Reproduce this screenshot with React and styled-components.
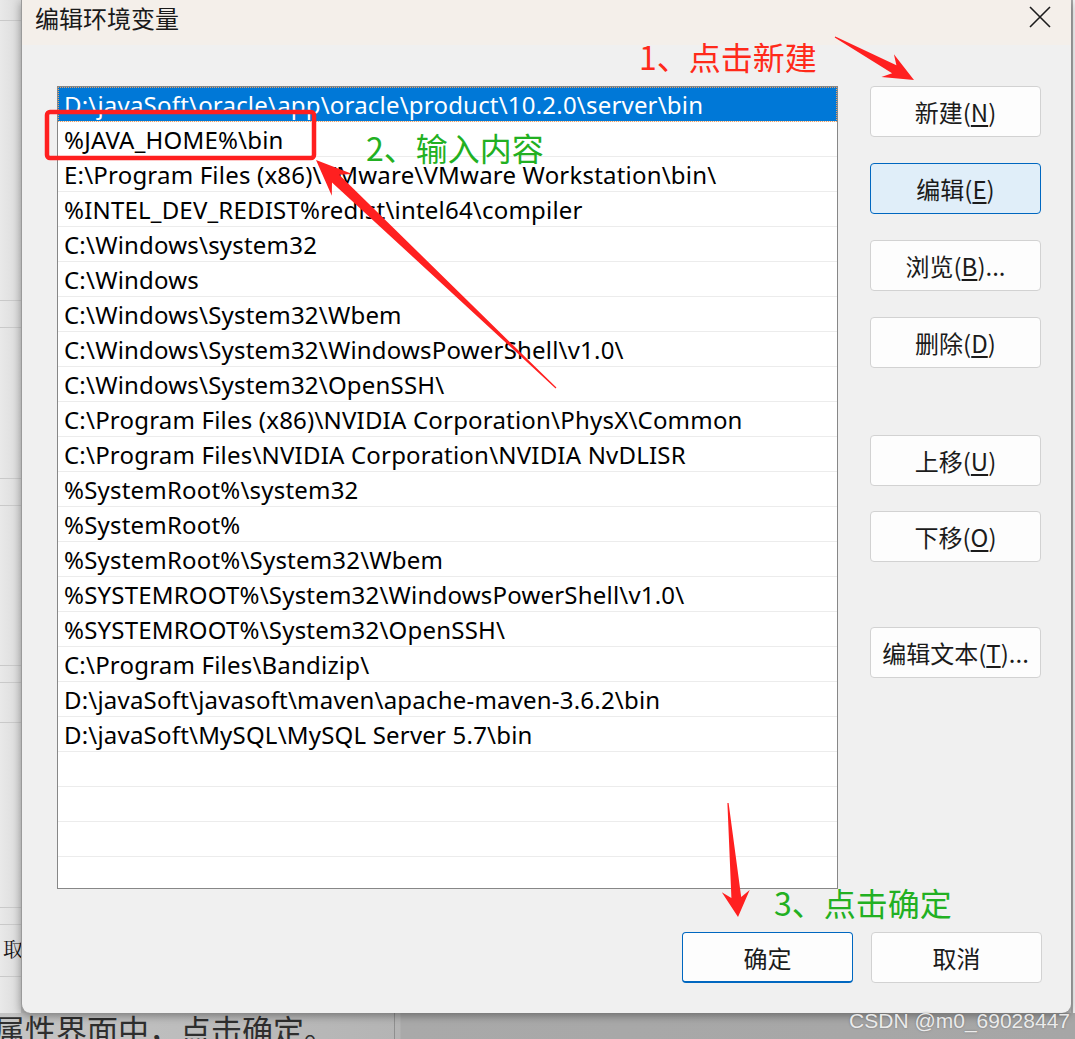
import styled, { createGlobalStyle } from 'styled-components';

const GlobalStyle = createGlobalStyle`
    html, body {
        margin: 0;
        padding: 0;
        overflow: hidden;
    }
    body {
        font-family: "Noto Sans", "Noto Sans CJK SC", sans-serif;
    }
`;

const CJK = `"Noto Sans CJK SC", "Noto Sans", sans-serif`;
const LATIN = `"Noto Sans", "Noto Sans CJK SC", sans-serif`;

const Page = styled.div`
    position: relative;
    width: 1075px;
    height: 1039px;
    display: grid;
    grid-template-columns: 21px 1050px 4px;
    grid-template-rows: 1013px 26px;
    background: #bdbdbd;
    overflow: hidden;
`;

const LeftStrip = styled.div`
    background:
        linear-gradient(#c9c9c9, #c9c9c9) 0 20px / 100% 1px no-repeat,
        linear-gradient(#c9c9c9, #c9c9c9) 0 300px / 100% 1px no-repeat,
        linear-gradient(#c9c9c9, #c9c9c9) 0 327px / 100% 1px no-repeat,
        linear-gradient(#c9c9c9, #c9c9c9) 0 478px / 100% 1px no-repeat,
        linear-gradient(#c9c9c9, #c9c9c9) 0 505px / 100% 1px no-repeat,
        linear-gradient(#c9c9c9, #c9c9c9) 0 665px / 100% 1px no-repeat,
        linear-gradient(#c9c9c9, #c9c9c9) 0 682px / 100% 1px no-repeat,
        linear-gradient(#c9c9c9, #c9c9c9) 0 722px / 100% 1px no-repeat,
        linear-gradient(#c9c9c9, #c9c9c9) 0 907px / 100% 1px no-repeat,
        linear-gradient(#c9c9c9, #c9c9c9) 0 924px / 100% 1px no-repeat,
        linear-gradient(#c9c9c9, #c9c9c9) 0 976px / 100% 1px no-repeat,
        linear-gradient(90deg, #e9e9e9, #dadada);
    display: flex;
    flex-direction: column;
    justify-content: flex-end;
    padding-bottom: 50px;
    box-sizing: border-box;
`;

const StripChar = styled.span`
    font-family: "Noto Serif CJK SC", ${CJK};
    font-size: 20px;
    color: #111;
    padding-left: 3px;
`;

const RightStrip = styled.div`
    background: #f2f2f2;
    border-left: 2px solid #a8a8a8;
`;

const BottomBand = styled.div`
    grid-column: 1 / -1;
    display: flex;
    background: linear-gradient(90deg, #c4c4c4 0, #b4b4b4 400px, #a9a9a9 401px, #a6a6a6 100%);
`;

const BandText = styled.span`
    width: 400px;
    height: 26px;
    font-family: ${CJK};
    font-size: 31px;
    line-height: 31px;
    color: #2e2e2e;
    margin-left: -6px;
    padding-top: 0;
    white-space: nowrap;
    overflow: hidden;
    border-right: 1px solid #8f8f8f;
`;

const Dialog = styled.div`
    display: flex;
    flex-direction: column;
    background: #f0f0f0;
    border-left: 1px solid #9a9a9a;
    border-radius: 0 0 9px 9px;
    box-shadow: 0 3px 8px rgba(0, 0, 0, 0.35);
    position: relative;
    z-index: 1;
`;

const TitleBar = styled.div`
    height: 45px;
    display: flex;
    align-items: center;
    justify-content: space-between;
    padding: 0 20px 0 13px;
    background: #f4efea;
`;

const Title = styled.span`
    font-family: ${CJK};
    font-size: 24px;
    color: #1a1a1a;
    margin-top: -10px;
`;

const Close = styled.svg`
    width: 22px;
    height: 22px;
    margin-top: -12px;
`;

const Body = styled.div`
    flex: 1;
    display: flex;
    flex-direction: column;
    padding: 41px 29px 30px 35px;
`;

const Main = styled.div`
    display: flex;
    gap: 32px;
`;

const ListBox = styled.div`
    width: 781px;
    height: 803px;
    box-sizing: border-box;
    border: 1px solid #878787;
    background: #fff;
    overflow: hidden;
`;

const Row = styled.div`
    height: 35px;
    box-sizing: border-box;
    display: flex;
    align-items: center;
    padding-left: 6px;
    border-bottom: 1px solid #ececec;
    font-family: ${LATIN};
    font-size: 24px;
    letter-spacing: 0.2px;
    white-space: nowrap;
    color: ${(p) => (p.$selected ? '#fff' : '#000')};
    background: ${(p) => (p.$selected ? '#0078d7' : 'transparent')};
    outline: ${(p) => (p.$selected ? '1px dotted #f0a060' : 'none')};
    outline-offset: -1px;
`;

const ButtonColumn = styled.div`
    display: flex;
    flex-direction: column;
    width: 171px;
`;

const Button = styled.div`
    width: 171px;
    height: 51px;
    box-sizing: border-box;
    display: flex;
    align-items: center;
    justify-content: center;
    margin-top: ${(p) => p.$gap || 0}px;
    border: 1px solid #d2d2d2;
    border-bottom-width: ${(p) => (p.$primary ? 2 : 1)}px;
    border-color: ${(p) => (p.$active || p.$primary ? '#0067c0' : '#d2d2d2')};
    border-radius: 4px;
    background: ${(p) => (p.$active ? '#e0eef9' : '#fdfdfd')};
    font-family: ${CJK};
    font-size: 24px;
    color: #1b1b1b;

    u {
        text-underline-offset: 3px;
    }
`;

const Footer = styled.div`
    display: flex;
    justify-content: flex-end;
    gap: 18px;
    margin-top: 43px;
`;

const Overlay = styled.div`
    position: absolute;
    inset: 0;
    z-index: 5;
    pointer-events: none;
`;

const Drawing = styled.svg`
    position: absolute;
    left: 0;
    top: 0;
`;

const Note = styled.span`
    position: absolute;
    left: ${(p) => p.$x}px;
    top: ${(p) => p.$y}px;
    font-family: ${CJK};
    font-size: 32px;
    line-height: 1;
    white-space: nowrap;
    color: ${(p) => (p.$tone === 'red' ? '#ff2a1a' : '#22b022')};
`;

const Watermark = styled.span`
    position: absolute;
    right: 5px;
    bottom: 6px;
    font-family: "Liberation Sans", Arial, sans-serif;
    font-size: 21px;
    color: rgba(255, 255, 255, 0.85);
    text-shadow: 0 0 2px rgba(80, 80, 80, 0.6);
`;

const entries = [
    'D:\\javaSoft\\oracle\\app\\oracle\\product\\10.2.0\\server\\bin',
    '%JAVA_HOME%\\bin',
    'E:\\Program Files (x86)\\VMware\\VMware Workstation\\bin\\',
    '%INTEL_DEV_REDIST%redist\\intel64\\compiler',
    'C:\\Windows\\system32',
    'C:\\Windows',
    'C:\\Windows\\System32\\Wbem',
    'C:\\Windows\\System32\\WindowsPowerShell\\v1.0\\',
    'C:\\Windows\\System32\\OpenSSH\\',
    'C:\\Program Files (x86)\\NVIDIA Corporation\\PhysX\\Common',
    'C:\\Program Files\\NVIDIA Corporation\\NVIDIA NvDLISR',
    '%SystemRoot%\\system32',
    '%SystemRoot%',
    '%SystemRoot%\\System32\\Wbem',
    '%SYSTEMROOT%\\System32\\WindowsPowerShell\\v1.0\\',
    '%SYSTEMROOT%\\System32\\OpenSSH\\',
    'C:\\Program Files\\Bandizip\\',
    'D:\\javaSoft\\javasoft\\maven\\apache-maven-3.6.2\\bin',
    'D:\\javaSoft\\MySQL\\MySQL Server 5.7\\bin',
];

const rows = [...entries, '', '', '', ''];

const sideButtons = [
    { label: '新建', key: 'N', gap: 0 },
    { label: '编辑', key: 'E', gap: 26, active: true },
    { label: '浏览', key: 'B', gap: 26, more: true },
    { label: '删除', key: 'D', gap: 26 },
    { label: '上移', key: 'U', gap: 67 },
    { label: '下移', key: 'O', gap: 25 },
    { label: '编辑文本', key: 'T', gap: 65, more: true },
];

// screenshot-tool style arrow: thin tail widening into a swept head
const arrowPoints = (sx, sy, ex, ey, len, half) => {
    const d = Math.hypot(ex - sx, ey - sy);
    const ux = (ex - sx) / d;
    const uy = (ey - sy) / d;
    const nx = -uy;
    const ny = ux;
    const bx = ex - ux * len;
    const by = ey - uy * len;
    const nbx = ex - ux * len * 0.75;
    const nby = ey - uy * len * 0.75;
    const shaft = half * 0.35;
    const pts = [
        [sx + nx * 0.6, sy + ny * 0.6],
        [nbx + nx * shaft, nby + ny * shaft],
        [bx + nx * half, by + ny * half],
        [ex, ey],
        [bx - nx * half, by - ny * half],
        [nbx - nx * shaft, nby - ny * shaft],
        [sx - nx * 0.6, sy - ny * 0.6],
    ];
    return pts.map((p) => p.map((v) => v.toFixed(1)).join(',')).join(' ');
};

const App = () => {
    return (
        <>
            <GlobalStyle />
            <Page>
                <LeftStrip>
                    <StripChar>取</StripChar>
                </LeftStrip>
                <Dialog>
                    <TitleBar>
                        <Title>编辑环境变量</Title>
                        <Close viewBox="0 0 22 22">
                            <path d="M1 1 L21 21 M21 1 L1 21" stroke="#1c1c1c" strokeWidth="1.6" />
                        </Close>
                    </TitleBar>
                    <Body>
                        <Main>
                            <ListBox>
                                {rows.map((text, i) => (
                                    <Row key={i} $selected={i === 0}>
                                        {text}
                                    </Row>
                                ))}
                            </ListBox>
                            <ButtonColumn>
                                {sideButtons.map((b) => (
                                    <Button key={b.key} $gap={b.gap} $active={b.active}>
                                        {b.label}(<u>{b.key}</u>){b.more ? '...' : ''}
                                    </Button>
                                ))}
                            </ButtonColumn>
                        </Main>
                        <Footer>
                            <Button $primary>确定</Button>
                            <Button>取消</Button>
                        </Footer>
                    </Body>
                </Dialog>
                <RightStrip />
                <BottomBand>
                    <BandText>属性界面中，点击确定。</BandText>
                </BottomBand>

                <Overlay>
                    <Drawing width="1075" height="1039" viewBox="0 0 1075 1039">
                        <rect
                            x="47"
                            y="112"
                            width="267"
                            height="46"
                            rx="3"
                            fill="none"
                            stroke="#ff1f1f"
                            strokeWidth="4.5"
                        />
                        <polygon points={arrowPoints(835, 37, 914, 80, 30, 13)} fill="#ff2020" />
                        <polygon points={arrowPoints(556, 388, 316, 160, 36, 15)} fill="#ff2020" />
                        <polygon points={arrowPoints(728, 803, 738, 917, 26, 14)} fill="#ff2020" />
                    </Drawing>
                    <Note $tone="red" $x={639} $y={40}>1、点击新建</Note>
                    <Note $tone="green" $x={366} $y={131}>2、输入内容</Note>
                    <Note $tone="green" $x={774} $y={886}>3、点击确定</Note>
                    <Watermark>CSDN @m0_69028447</Watermark>
                </Overlay>
            </Page>
        </>
    );
};

export default App;
